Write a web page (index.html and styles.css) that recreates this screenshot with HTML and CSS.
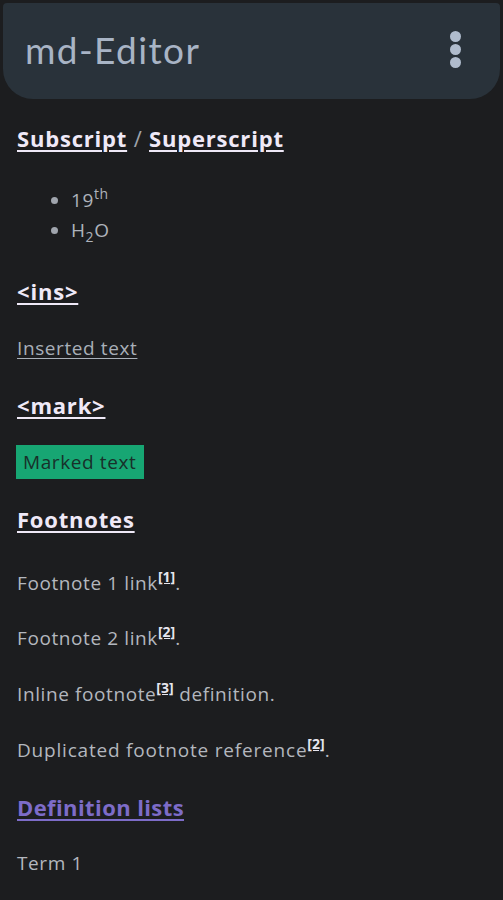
FILE: index.html
```html
<!DOCTYPE html>
<html>
<head>
<meta charset="utf-8">
<link rel="stylesheet" href="styles.css">
</head>
<body>
<header class="appbar">
  <div class="title">md-Editor</div>
  <div class="menu"><span class="dot"></span><span class="dot"></span><span class="dot"></span></div>
</header>
<main class="content">
  <h2 class="h first"><a class="hl">Subscript</a> <span class="slash">/</span> <a class="hl">Superscript</a></h2>
  <ul class="list">
    <li>19<sup class="sp">th</sup></li>
    <li>H<sub class="sb">2</sub>O</li>
  </ul>
  <h2 class="h"><a class="hl">&lt;ins&gt;</a></h2>
  <p class="p"><ins class="ins">Inserted text</ins></p>
  <h2 class="h"><a class="hl">&lt;mark&gt;</a></h2>
  <p class="p"><mark class="mark">Marked text</mark></p>
  <h2 class="h"><a class="hl">Footnotes</a></h2>
  <p class="p fn">Footnote 1 link<sup class="ref"><a>[1]</a></sup>.</p>
  <p class="p fn2">Footnote 2 link<sup class="ref"><a>[2]</a></sup>.</p>
  <p class="p fn3">Inline footnote<sup class="ref"><a>[3]</a></sup> definition.</p>
  <p class="p fn3 wide">Duplicated footnote reference<sup class="ref"><a>[2]</a></sup>.</p>
  <h2 class="h"><a class="hl purple narrow">Definition lists</a></h2>
  <p class="p fn3">Term 1</p>
</main>
</body>
</html>
```
FILE: styles.css
```css
html, body {
  margin: 0;
  padding: 0;
  background: #1c1d1f;
}
body {
  font-family: "Open Sans", "Noto Sans", sans-serif;
  color: #b3b7be;
  height: 900px;
  overflow: hidden;
}
.appbar {
  margin: 3px 3px 0 3px;
  height: 96px;
  background: #29323a;
  border-radius: 4px 4px 30px 30px;
  display: flex;
  align-items: center;
  justify-content: space-between;
  padding: 0 39px 0 22px;
  box-sizing: border-box;
}
.title {
  font-family: Lato, "Open Sans", sans-serif;
  font-size: 37px;
  color: #a8b4c5;
  letter-spacing: 1.4px;
  margin-top: -4px;
}
.menu {
  display: flex;
  flex-direction: column;
  gap: 2px;
  margin-top: -4px;
}
.dot {
  width: 11px;
  height: 11px;
  border-radius: 50%;
  background: #b0bccd;
  display: block;
}
.content {
  padding: 0 17px;
  display: flex;
  flex-direction: column;
}
.h {
  font-size: 22px;
  font-weight: 700;
  line-height: 30px;
  letter-spacing: 0.8px;
  margin: 27px 0 0 0;
}
.h.first { margin-top: 24px; }
.hl {
  color: #efe9f7;
  text-decoration: underline;
  text-decoration-thickness: 2px;
  text-underline-offset: 3px;
}
.hl.purple { color: #7d6cc8; }
.hl.narrow { letter-spacing: 0.4px; }
.slash {
  color: #9ea3ab;
  font-weight: 400;
}
.list {
  margin: 32px 0 0 0;
  padding-left: 54px;
  font-size: 19px;
  letter-spacing: 0.6px;
  line-height: 30px;
  color: #aeb3bb;
}
.list li::marker { color: #a0a5ad; }
.list + .h { margin-top: 31px; }
.sp { font-size: 14px; line-height: 0; vertical-align: 8px; }
.sb { font-size: 14px; line-height: 0; vertical-align: -5px; }
.p {
  font-size: 19px;
  letter-spacing: 0.6px;
  line-height: 30px;
  margin: 27px 0 0 0;
}
.p.wide { letter-spacing: 0.8px; }
.ins {
  text-decoration: underline;
  text-underline-offset: 3px;
  color: #a8afb8;
}
.mark {
  background: #17a673;
  color: #18302a;
  padding: 4px 8px 4px 7px;
  margin-left: -1px;
}
.fn { margin-top: 34px; }
.fn2 { margin-top: 25px; }
.fn3 { margin-top: 26px; }
.ref {
  font-size: 14px;
  letter-spacing: 0;
  line-height: 0;
  vertical-align: 8px;
  font-weight: 700;
}
.ref a {
  color: #e6e6ee;
  text-decoration: underline;
  text-underline-offset: 1px;
}
```
